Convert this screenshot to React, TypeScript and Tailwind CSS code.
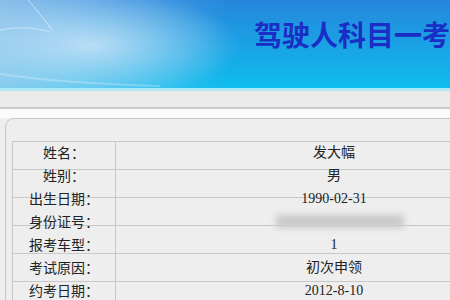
const rows: { label: string; value: string; blur?: boolean }[] = [
  { label: '姓名：', value: '发大幅' },
  { label: '姓别：', value: '男' },
  { label: '出生日期：', value: '1990-02-31' },
  { label: '身份证号：', value: '', blur: true },
  { label: '报考车型：', value: '1' },
  { label: '考试原因：', value: '初次申领' },
  { label: '约考日期：', value: '2012-8-10' },
];

export default function App() {
  return (
    <div className="w-[450px] h-[300px] overflow-hidden bg-[#eeeeee] font-['Liberation_Serif','Noto_Sans_CJK_SC',serif] text-[#222]">
      <header className="relative h-[88px] overflow-hidden bg-[radial-gradient(ellipse_150px_55px_at_90px_45px,rgba(210,232,248,0.8),rgba(210,232,248,0)),linear-gradient(to_right,rgba(170,208,238,0.75),rgba(170,208,238,0.3)_120px,rgba(170,208,238,0)_230px),linear-gradient(to_bottom,#2586dc,#0fbdee)]">
        <svg className="absolute left-0 top-0" width="200" height="88" viewBox="0 0 200 88" fill="none">
          <path d="M28 0 C40 14 48 24 52 30" stroke="white" strokeOpacity="0.55" strokeWidth="1" />
          <path d="M0 30 C20 26 36 28 50 32" stroke="white" strokeOpacity="0.45" strokeWidth="1" />
          <path d="M0 74 C40 80 90 84 160 86" stroke="white" strokeOpacity="0.25" strokeWidth="2" />
        </svg>
        <h1 className="relative whitespace-nowrap pl-[254px] pt-[20px] text-[28px] leading-[28px] font-bold text-[#1a2ec6] font-['Noto_Sans_CJK_SC',sans-serif]">
          驾驶人科目一考试预约信息
        </h1>
      </header>
      <div className="h-[3px] bg-[#aee9f8]" />
      <div className="h-[16px] bg-[#ebebeb]" />
      <div className="h-[2px] bg-[#cbcbcb]" />
      <div className="h-[9px] bg-[#fbfbfb]" />
      <section className="ml-[5px] w-[620px] rounded-tl-[9px] border-l border-t border-[#c6c6c6] bg-[#eeeeee] pl-[6px] pt-[22px]">
        <div className="w-[540px] border-l border-[#c8c8c8] bg-[repeating-linear-gradient(to_bottom,#c8c8c8_0px,#c8c8c8_1px,transparent_1px,transparent_28px)]">
          {rows.map((r) => (
            <div key={r.label} className="grid grid-cols-[103px_1fr] h-[23px]">
              <div className="flex items-center justify-center border-r border-[#c8c8c8] text-[14px] font-['Noto_Sans_CJK_SC',sans-serif]">
                {r.label}
              </div>
              <div className="flex items-center justify-center text-[14px]">
                {r.blur ? (
                  <div className="ml-[12px] h-[13px] w-[128px] bg-[#c9c9c9] blur-[3px]" />
                ) : (
                  r.value
                )}
              </div>
            </div>
          ))}
        </div>
      </section>
    </div>
  );
}
